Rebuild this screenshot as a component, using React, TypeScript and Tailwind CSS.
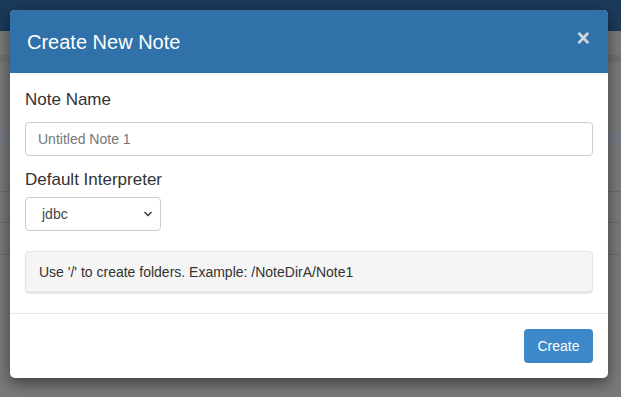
import { ChevronDown } from 'lucide-react';

export default function App() {
  return (
    <div className="relative w-[621px] h-[397px] overflow-hidden bg-[#7a7a7a] font-['Liberation_Sans',Arial,sans-serif]">
      {/* page behind the overlay */}
      <div className="h-[31px] bg-[#1b3a5a]" />
      <div className="h-[24px]" />
      <div className="h-[7px] bg-[#727272]" />
      <div className="h-[68px]" />
      <div className="h-[13px] bg-[#767a84]" />
      <div className="h-[49px] border-b border-[#6c6c6c]" />
      <div className="h-[31px] border-b border-[#6c6c6c]" />
      <div className="h-[32px] border-b border-[#6c6c6c]" />

      {/* modal */}
      <div className="absolute left-[10px] top-[10px] w-[598px] rounded-[5px] bg-white shadow-[0_5px_15px_rgba(0,0,0,0.5)] overflow-hidden">
        <div className="flex h-[63px] items-center justify-between bg-[#3071a9] pl-[17px] pr-[18px]">
          <h4 className="text-[20px] text-white leading-none">Create New Note</h4>
          <span className="text-[23px] font-bold leading-none text-[#d3d9df] -mt-[6px]">×</span>
        </div>

        <div className="px-[15px] pt-[15px] pb-[20px]">
          <label className="block text-[17px] leading-[24px] text-[#333]">Note Name</label>
          <div className="mt-[10px] flex h-[34px] items-center rounded-[4px] border border-[#ccc] px-[12px] text-[14px] text-[#777]">
            Untitled Note 1
          </div>
          <label className="mt-[12px] block text-[17px] leading-[24px] text-[#333]">Default Interpreter</label>
          <div className="mt-[5px] flex h-[34px] w-[136px] items-center justify-between rounded-[4px] border border-[#ccc] pl-[16px] pr-[6px] text-[14px] text-[#444]">
            <span>jdbc</span>
            <ChevronDown className="h-[12px] w-[12px] text-[#444]" strokeWidth={3.5} />
          </div>
          <div className="mt-[20px] flex h-[42px] items-center rounded-[4px] border border-[#e3e3e3] bg-[#f5f5f5] px-[13px] text-[14px] text-[#333] shadow-[inset_0_-1px_1px_rgba(0,0,0,0.05),0_1px_1px_rgba(0,0,0,0.08)]">
            Use '/' to create folders. Example: /NoteDirA/Note1
          </div>
        </div>

        <div className="flex justify-end border-t border-[#e5e5e5] px-[15px] pt-[15px] pb-[15px]">
          <button className="h-[34px] w-[69px] rounded-[4px] bg-[#3d88c8] text-[14px] text-white">Create</button>
        </div>
      </div>
    </div>
  );
}
